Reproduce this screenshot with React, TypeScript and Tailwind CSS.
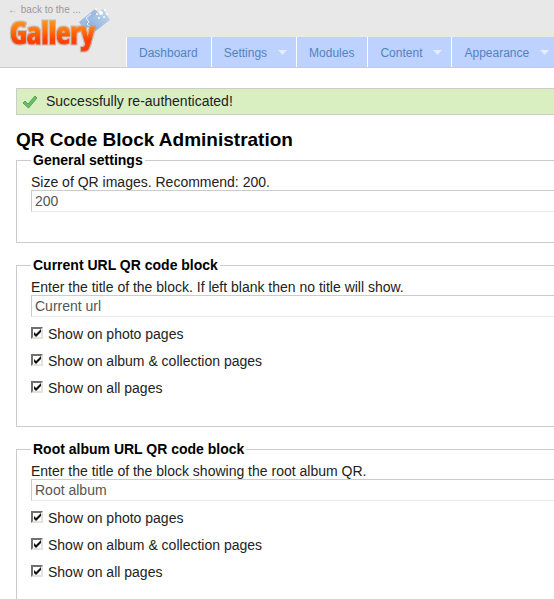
import { useId } from "react";

const navItems = [
    { title: 'Dashboard', menu: false },
    { title: 'Settings', menu: true },
    { title: 'Modules', menu: false },
    { title: 'Content', menu: true },
    { title: 'Appearance', menu: true },
];

const pageOptions = [
    'Show on photo pages',
    'Show on album & collection pages',
    'Show on all pages',
];

function Logo() {
    return (
        <svg className="block overflow-visible" width="106" height="44" viewBox="0 0 106 44" role="img" aria-label="Gallery">
            <defs>
                <linearGradient id="logo-fill" gradientUnits="userSpaceOnUse" x1="0" y1="3" x2="0" y2="28">
                    <stop offset="0" stopColor="#ff9c22" />
                    <stop offset="0.45" stopColor="#ff7408" />
                    <stop offset="0.85" stopColor="#fb4000" />
                </linearGradient>
                <linearGradient id="logo-photo" x1="0" y1="1" x2="1" y2="0">
                    <stop offset="0" stopColor="#7fa6d6" />
                    <stop offset="1" stopColor="#c9daf0" />
                </linearGradient>
                <filter id="logo-edge" x="-5%" y="-5%" width="110%" height="110%">
                    <feMorphology in="SourceAlpha" operator="dilate" radius="1" result="grown" />
                    <feFlood floodColor="#b09484" floodOpacity="0.55" />
                    <feComposite in2="grown" operator="in" />
                    <feMerge>
                        <feMergeNode />
                        <feMergeNode in="SourceGraphic" />
                    </feMerge>
                </filter>
            </defs>
            <path d="M71 6L87-7l4 5-9 12-6 4z" fill="#9dbbe0" />
            <path d="M78 7L95-7l7 11-17 13z" fill="url(#logo-photo)" />
            <path d="M83-2l-5 4 3 4-2 2 8 7" fill="none" stroke="#eef4fb" strokeWidth="1" />
            <g fill="#ffffff">
                <circle cx="93" cy="-3" r="2" />
                <circle cx="88" cy="-7" r="1" />
                <circle cx="89" cy="-2" r="1" />
                <circle cx="97" cy="-6" r="1" />
                <circle cx="96" cy="1" r="1" />
                <circle cx="91" cy="2" r="1" />
                <circle cx="99" cy="-2" r="1" />
            </g>
            <text x="2" y="28" fontSize="31" fontWeight="900" fill="url(#logo-fill)" stroke="url(#logo-fill)" strokeWidth="1" filter="url(#logo-edge)"
                fontFamily="'Liberation Sans Narrow', 'Open Sans Condensed', 'Roboto Condensed', Roboto, sans-serif">Gallery</text>
        </svg>
    )
}

function Check({ label }: { label: string }) {
    return (
        <label className="flex h-[27px] items-center gap-[5px]">
            <span className="relative mb-1 h-[12px] w-[12px]">
                <input type="checkbox" defaultChecked className="peer block h-[12px] w-[12px] appearance-none border-2 border-t-[#707070] border-l-[#707070] border-r-[#e4e2dc] border-b-[#e4e2dc] bg-white" />
                <svg className="pointer-events-none absolute inset-0 hidden peer-checked:block" width="12" height="12" viewBox="0 0 12 12">
                    <path d="M3 5v3l2 2 5-5V2L5 7z" fill="#111" />
                </svg>
            </span>
            {label}
        </label>
    )
}

function Block({ legend, label, value, checks }: { legend: string, label: string, value: string, checks?: string[] }) {
    const id = useId();
    return (
        <fieldset className={`mb-[14px] border border-r-0 border-[#ccc] pl-[14px] ${checks ? 'pb-6' : 'pb-[26px]'}`}>
            <legend className="px-[2px] font-bold leading-4 text-black">{legend}</legend>
            <label htmlFor={id} className="mt-[6px] block leading-4">{label}</label>
            <input id={id} type="text" defaultValue={value} className="mb-1 block h-[22px] w-full border border-r-0 border-t-[#ccc] border-l-[#ccc] border-b-[#e8e8e8] px-[3px] text-[#555] outline-none" />
            {checks?.map((check) => <Check key={check} label={check} />)}
        </fieldset>
    )
}

export default function App() {
    return (
        <div className="min-h-screen overflow-hidden bg-white font-['Liberation_Sans',Arial,sans-serif] text-[14px] text-[#222]">
            <header className="flex h-[68px] overflow-hidden border-b border-[#ccc] bg-[#e8e8e8]">
                <div className="w-[126px] shrink-0 pl-2">
                    <a href="#" className="block pt-1 text-[10px] leading-3 text-[#999]">← back to the ...</a>
                    <Logo />
                </div>
                <nav className="flex self-end">
                    {navItems.map((item) => (
                        <a key={item.title} href="#" className={`flex h-[30px] shrink-0 items-center border-l border-white bg-[#bdd2ff] pt-px pl-3 text-[12px] text-[#5382bf] ${item.menu ? 'pr-[9px]' : 'pr-[13px]'}`}>
                            {item.title}
                            {item.menu && (
                                <svg className="ml-[11px]" width="9" height="5" viewBox="0 0 9 5">
                                    <path d="M0 0h9L4.500 5z" fill="#e4edff" />
                                </svg>
                            )}
                        </a>
                    ))}
                </nav>
            </header>
            <main className="pt-5 pl-4">
                <div role="status" className="flex h-[27px] items-center gap-2 border border-r-0 border-[#ccc] bg-[#d9efc2] pl-[5px]">
                    <svg width="16" height="16" viewBox="0 0 16 16">
                        <path d="M1 9l2-2 3 3 7-8 2 2-8.500 10z" fill="#6cbd6a" stroke="#55a35a" strokeWidth="1" strokeLinejoin="round" />
                    </svg>
                    Successfully re-authenticated!
                </div>
                <h1 className="mt-[13px] text-[19px] leading-6 font-bold text-black">QR Code Block Administration</h1>
                <form>
                    <Block legend="General settings" label="Size of QR images. Recommend: 200." value="200" />
                    <Block legend="Current URL QR code block" label="Enter the title of the block. If left blank then no title will show." value="Current url" checks={pageOptions} />
                    <Block legend="Root album URL QR code block" label="Enter the title of the block showing the root album QR." value="Root album" checks={pageOptions} />
                </form>
            </main>
        </div>
    )
}
